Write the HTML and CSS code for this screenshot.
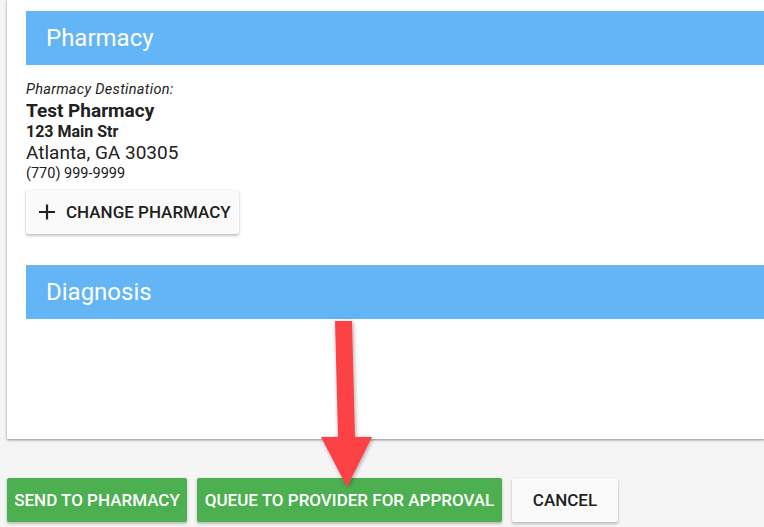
FILE: index.html
```html
<!DOCTYPE html>
<html>
<head>
<meta charset="utf-8">
<link rel="stylesheet" href="styles.css">
</head>
<body>
<div class="card">
  <div class="section-head">Pharmacy</div>
  <div class="pharmacy">
    <div class="dest-label">Pharmacy Destination:</div>
    <div class="ph-name">Test Pharmacy</div>
    <div class="ph-street">123 Main Str</div>
    <div class="ph-city">Atlanta, GA 30305</div>
    <div class="ph-phone">(770) 999-9999</div>
    <button class="btn btn-light btn-change">
      <svg class="plus" width="18" height="18" viewBox="0 0 18 18"><path d="M9 1.5v15M1 9h16" stroke="#212121" stroke-width="2.2" fill="none"/></svg>
      <span>Change Pharmacy</span>
    </button>
  </div>
  <div class="section-head">Diagnosis</div>
  <div class="diag-body"></div>
</div>
<div class="actions">
  <button class="btn btn-green btn-send">Send to Pharmacy</button>
  <button class="btn btn-green btn-queue">Queue to Provider for Approval</button>
  <button class="btn btn-light btn-cancel">Cancel</button>
</div>
<svg class="arrow" width="764" height="527" viewBox="0 0 764 527">
  <defs>
    <filter id="sh" x="-50%" y="-20%" width="200%" height="140%">
      <feDropShadow dx="1" dy="1" stdDeviation="2" flood-color="#000" flood-opacity="0.35"/>
    </filter>
  </defs>
  <polygon filter="url(#sh)" fill="#fd4245" points="335,321 352,321 355,437 372,437 347,487 321,437 338,437"/>
</svg>
</body>
</html>
```
FILE: styles.css
```css
html, body {
  margin: 0;
  padding: 0;
}
body {
  background: #f5f5f5;
  font-family: Roboto, "Liberation Sans", Arial, sans-serif;
  color: #212121;
  width: 764px;
  height: 527px;
  overflow: hidden;
  position: relative;
}
.card {
  margin-left: 7px;
  background: #fff;
  padding: 11px 0 0 19px;
  box-shadow: 0 1px 3px rgba(0,0,0,0.25), 0 1px 2px rgba(0,0,0,0.2);
}
.section-head {
  height: 54px;
  background: #64b5f6;
  color: #fff;
  font-size: 24px;
  display: flex;
  align-items: center;
  padding-left: 20px;
}
.pharmacy {
  padding-top: 16px;
  padding-bottom: 31px;
}
.dest-label {
  font-style: italic;
  font-size: 14.5px;
  line-height: 18px;
  letter-spacing: 0.3px;
}
.ph-name {
  font-weight: 700;
  font-size: 19px;
  line-height: 24px;
}
.ph-street {
  font-weight: 700;
  font-size: 16px;
  line-height: 18px;
}
.ph-city {
  font-size: 19px;
  line-height: 24px;
}
.ph-phone {
  font-size: 14.5px;
  line-height: 17px;
}
.btn {
  border: none;
  border-radius: 2px;
  font-family: Roboto, "Liberation Sans", Arial, sans-serif;
  font-weight: 500;
  font-size: 17px;
  text-transform: uppercase;
  height: 44px;
  padding: 0 7px;
  display: inline-flex;
  align-items: center;
  box-shadow: 0 2px 3px rgba(0,0,0,0.22), 0 0 2px rgba(0,0,0,0.1);
}
.btn-light {
  background: #fafafa;
  color: #212121;
}
.btn-green {
  background: #4caf50;
  color: #fff;
}
.btn-change {
  margin-top: 8px;
  padding: 0 6px 0 12px;
  gap: 10px;
  width: 213px;
}
.plus {
  display: block;
  flex: none;
}
.diag-body {
  height: 120px;
}
.actions {
  display: flex;
  gap: 10px;
  padding-left: 7px;
  margin-top: 39px;
}
.btn-send { width: 180px; justify-content: center; }
.btn-queue { width: 305px; justify-content: center; }
.btn-cancel { width: 106px; justify-content: center; }
.arrow {
  position: absolute;
  left: 0;
  top: 0;
  pointer-events: none;
}
```
